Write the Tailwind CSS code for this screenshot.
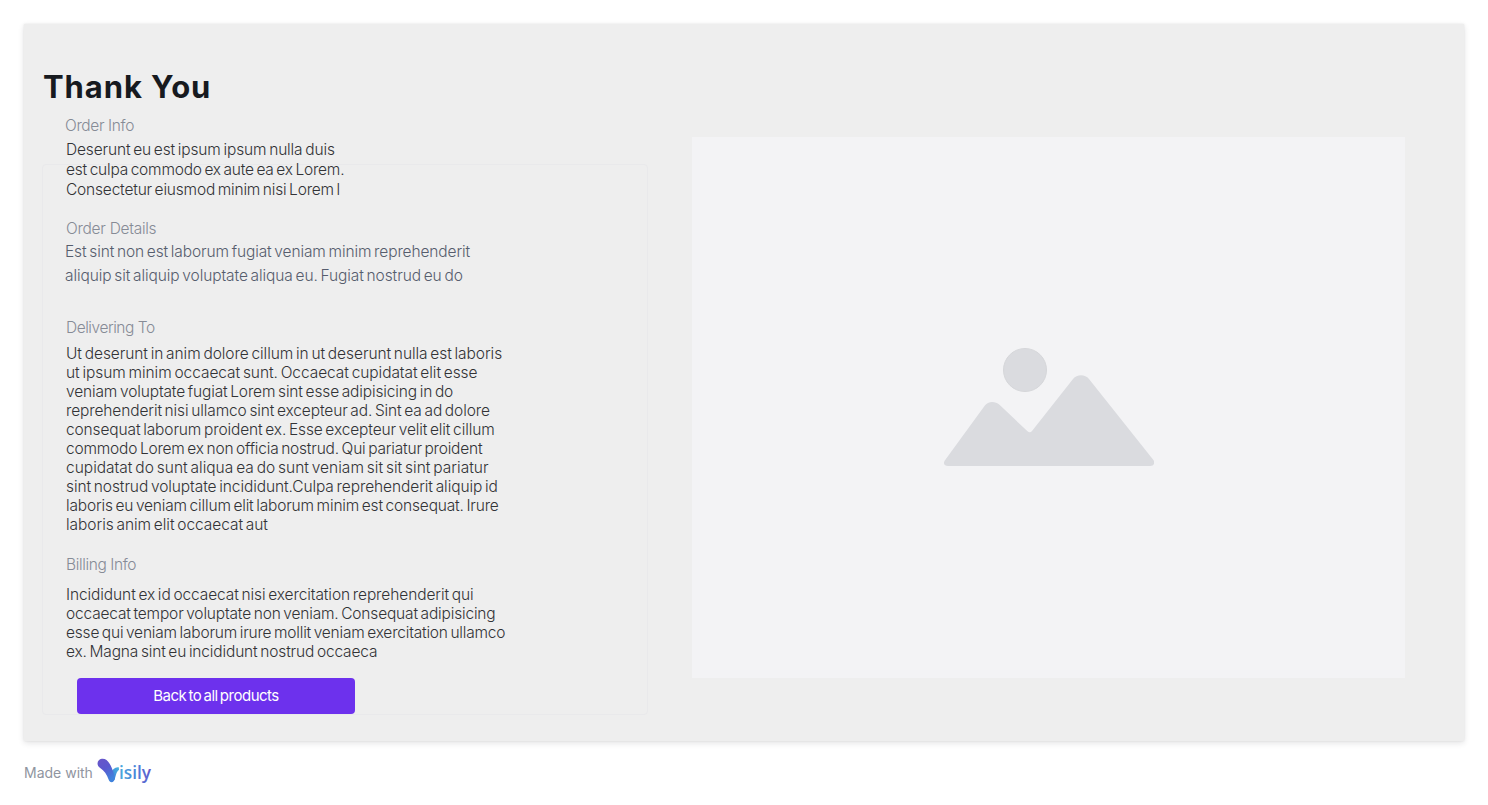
<!DOCTYPE html>
<html lang="en">
<head>
<meta charset="utf-8">
<title>Thank You</title>
<script src="https://cdn.jsdelivr.net/npm/@tailwindcss/browser@4"></script>
</head>
<body class="bg-white font-['Inter',sans-serif] px-6 pt-6 overflow-hidden">
<main class="flex h-[717px] w-[1440px] items-start bg-[#eeeeee] shadow-[0_0_2px_rgba(23,26,31,0.08),0_2px_6px_rgba(23,26,31,0.12)]">
  <section class="relative h-[691px] w-[624px] shrink-0 pl-[42px] pt-[43px] text-[15.5px] font-light text-[#323336] whitespace-nowrap">
    <div class="absolute left-[18px] top-[140px] h-[551px] w-[606px] rounded border border-[#e9e9eb]"></div>
    <div class="relative">
      <h1 class="-ml-[23px] text-[31px] leading-10 font-bold tracking-[0.9px] text-[#171a1f]">Thank You</h1>

      <h2 class="-ml-px mt-[7px] leading-6 text-[#868b96] tracking-[-0.37px]">Order Info</h2>
      <div class="mt-[2px] leading-5 [word-spacing:-1.5px]">
        <p class="tracking-[-0.13px]">Deserunt eu est ipsum ipsum nulla duis</p>
        <p class="tracking-[-0.21px]">est culpa commodo ex aute ea ex Lorem.</p>
        <p class="tracking-[-0.19px]">Consectetur eiusmod minim nisi Lorem l</p>
      </div>

      <h2 class="mt-[17px] leading-6 text-[#868b96] tracking-[-0.28px]">Order Details</h2>
      <div class="-ml-px -mt-px leading-6 text-[#565d6d] [word-spacing:-1.5px]">
        <p class="tracking-[-0.11px]">Est sint non est laborum fugiat veniam minim reprehenderit</p>
        <p class="tracking-[-0.09px]">aliquip sit aliquip voluptate aliqua eu. Fugiat nostrud eu do</p>
      </div>

      <h2 class="mt-7 leading-6 text-[#868b96] tracking-[-0.46px]">Delivering To</h2>
      <div class="mt-1 leading-[19px] [word-spacing:-1.5px]">
        <p class="tracking-[-0.065px]">Ut deserunt in anim dolore cillum in ut deserunt nulla est laboris</p>
        <p class="tracking-[-0.06px]">ut ipsum minim occaecat sunt. Occaecat cupidatat elit esse</p>
        <p class="tracking-[-0.137px]">veniam voluptate fugiat Lorem sint esse adipisicing in do</p>
        <p class="tracking-[-0.12px]">reprehenderit nisi ullamco sint excepteur ad. Sint ea ad dolore</p>
        <p class="tracking-[-0.12px]">consequat laborum proident ex. Esse excepteur velit elit cillum</p>
        <p class="tracking-[-0.195px]">commodo Lorem ex non officia nostrud. Qui pariatur proident</p>
        <p class="tracking-[0.005px]">cupidatat do sunt aliqua ea do sunt veniam sit sit sint pariatur</p>
        <p class="tracking-[-0.085px]">sint nostrud voluptate incididunt.Culpa reprehenderit aliquip id</p>
        <p class="tracking-[-0.175px]">laboris eu veniam cillum elit laborum minim est consequat. Irure</p>
        <p class="tracking-[-0.05px]">laboris anim elit occaecat aut</p>
      </div>

      <h2 class="mt-[19px] leading-6 text-[#868b96] tracking-[-0.38px]">Billing Info</h2>
      <div class="mt-2 leading-[19px] [word-spacing:-1.5px]">
        <p class="tracking-[-0.095px]">Incididunt ex id occaecat nisi exercitation reprehenderit qui</p>
        <p class="tracking-[-0.17px]">occaecat tempor voluptate non veniam. Consequat adipisicing</p>
        <p class="tracking-[-0.197px]">esse qui veniam laborum irure mollit veniam exercitation ullamco</p>
        <p class="tracking-[-0.15px]">ex. Magna sint eu incididunt nostrud occaeca</p>
      </div>

      <button class="ml-[11px] mt-[17px] block h-9 w-[278px] rounded bg-[#6d31ed] text-[15px] font-normal tracking-[-0.5px] [word-spacing:-1.5px] text-white">Back to all products</button>
    </div>
  </section>

  <div class="ml-11 mt-[113px] flex h-[541px] w-[713px] bg-[#f3f3f5]">
    <svg class="ml-[252px] mt-[211px] h-[118px] w-[210px]" viewBox="0 0 210 118" fill="#dadbdf">
      <circle cx="81" cy="22" r="21.5" stroke="#d6d7da"/>
      <path d="M.8 112.5 40.5 58C44 53 51 53 55.500 56.700L83.500 83.300Q86 85.500 88 83L129 31C133 26 141 26 145 31L209 111.500C211.500 114.500 210 118 206 118H4C0 118-1 115 .8 112.500Z"/>
    </svg>
  </div>
</main>

<footer class="mt-[17px] flex h-7 items-start text-sm text-[#9095a0]">
  <span class="mt-[5px] w-[73px] whitespace-nowrap">Made with</span>
  <svg class="h-7 w-14" viewBox="0 0 56 28">
    <defs>
      <linearGradient id="v" x1="0" y1="0" x2=".5" y2="1"><stop stop-color="#6956c8"/><stop offset=".5" stop-color="#5c58cf"/><stop offset="1" stop-color="#3f82dc"/></linearGradient>
      <linearGradient id="arm" x1="0" y1="1" x2="1" y2="0"><stop stop-color="#3f70da"/><stop offset="1" stop-color="#46b5dd"/></linearGradient>
      <linearGradient id="t" gradientUnits="userSpaceOnUse" x1="22" y1="0" x2="54" y2="0"><stop stop-color="#49a9dd"/><stop offset=".55" stop-color="#4b82d8"/><stop offset="1" stop-color="#6457cc"/></linearGradient>
    </defs>
    <path fill="url(#arm)" d="M13.500 16C15.500 11 18 8.700 21.800 9.200L22 12C19.500 13 18.800 18 17.600 21.500Q16 24.200 13.800 23.800Z"/>
    <path fill="url(#v)" d="M4.800 .8C9.800.2 13 5 16 13L18 20C17.600 25 12.800 25.300 11.700 21.800C9.800 16.200 7.200 12.600 3.200 10C-1.200 7 .2 1.500 4.800 .8Z"/>
    <text x="22" y="20.500" textLength="32" lengthAdjust="spacingAndGlyphs" fill="url(#t)" font-family="Open Sans, sans-serif" font-size="18.500" font-weight="600">isily</text>
  </svg>
</footer>
</body>
</html>
